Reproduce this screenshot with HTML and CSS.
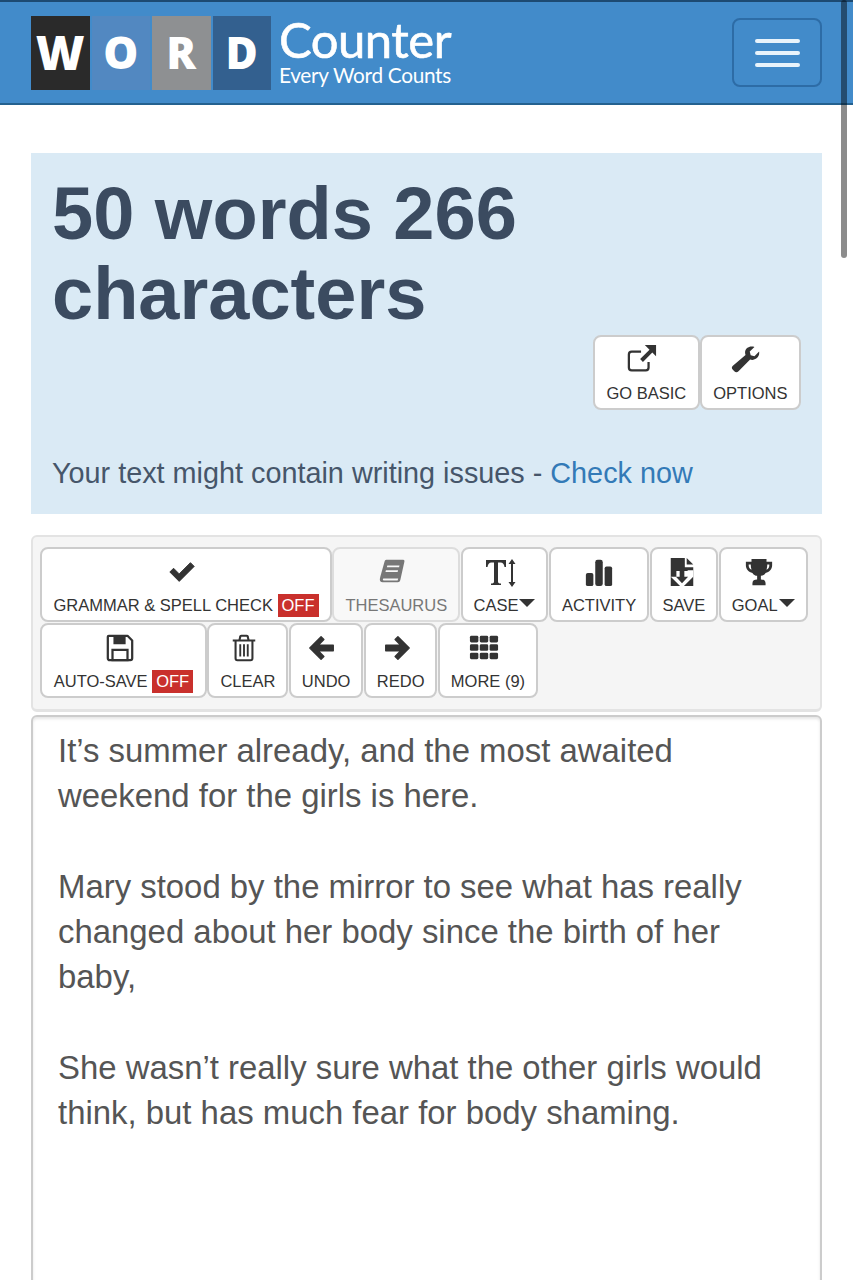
FILE: index.html
```html
<!DOCTYPE html>
<html lang="en">
<head>
    <meta charset="UTF-8">
    <meta name="viewport" content="width=device-width, initial-scale=1.0">
    <title>Word Counter</title>
    <link rel="stylesheet" href="styles.css">
</head>
<body>
    <header class="navbar">
        <a class="brand" href="#">
            <span class="tiles">
                <span class="tile tile-w">W</span>
                <span class="tile tile-o">O</span>
                <span class="tile tile-r">R</span>
                <span class="tile tile-d">D</span>
            </span>
            <span class="brand-text">
                <span class="brand-name">Counter</span>
                <span class="brand-tag">Every Word Counts</span>
            </span>
        </a>
        <button class="menu-btn" aria-label="Menu">
            <span class="menu-bar"></span>
            <span class="menu-bar"></span>
            <span class="menu-bar"></span>
        </button>
    </header>
    <div class="scroll-thumb"></div>

    <main class="container">
        <section class="count-panel">
            <h1 class="count-title">50 words 266 characters</h1>
            <div class="panel-actions">
                <a class="tool-btn" href="#">
                    <svg class="icon" viewBox="0 0 32 32"><path d="M23 18v6a3 3 0 0 1-3 3H5a3 3 0 0 1-3-3V10a3 3 0 0 1 3-3h10" fill="none" stroke="#333" stroke-width="2.400"/><path d="M19 0h12v12l-4-4-10 10-3-3L24 5z" fill="#333"/></svg>
                    <span>GO BASIC</span>
                </a>
                <a class="tool-btn" href="#">
                    <svg class="icon" viewBox="0 0 32 32"><path d="M30 7l-5 5-4-1-1-4 5-5c-5-1.500-10 1-10 6 0 1 .2 2 .5 2.600L2 22a3.200 3.200 0 0 0 0 4.500l1.500 1.500a3.200 3.200 0 0 0 4.500 0l12.400-12.500c4 1.500 10.600-1.500 9.600-8.500z" fill="#333"/></svg>
                    <span>OPTIONS</span>
                </a>
            </div>
            <p class="issues">Your text might contain writing issues - <a href="#">Check now</a></p>
        </section>

        <section class="toolbar">
            <a class="tool-btn tool-grammar" href="#">
                <svg class="icon" viewBox="0 0 32 32"><path d="M3 16l4-4 6 6L25 6l4 4-16 16z" fill="#333" stroke="#333" stroke-linejoin="round"/></svg>
                <span>GRAMMAR &amp; SPELL CHECK <b class="off">OFF</b></span>
            </a>
            <a class="tool-btn tool-muted" href="#">
                <svg class="icon" viewBox="0 0 32 32"><path d="M10 3h18c1 0 1.500 1 1.200 2L25 24c-.3 1.500-1 3-3 3H6c-2 0-3-1.500-3-3 0-1 .3-2 .5-3L8 5c.3-1 1-2 2-2zm1 6l-.5 2h13l.5-2zm-1.500 5l-.5 2h13l.5-2zM7 23c-1 0-1 2 0 2h15l.6-2z" fill="#777" fill-rule="evenodd"/></svg>
                <span>THESAURUS</span>
            </a>
            <a class="tool-btn" href="#">
                <svg class="icon icon-case" viewBox="0 0 32 32"><path d="M1 3h20v7h-1.500c-.5-3-1.500-4.500-4-4.500H13v19c0 1.500.8 2 3 2V28H6v-1.500c2.200 0 3-.5 3-2v-19H6.500c-2.500 0-3.500 1.500-4 4.500H1z" fill="#333"/><path d="M27 6v20" stroke="#333" stroke-width="2"/><path d="M23.500 7L27 2l3.500 5zM23.500 25l3.500 5 3.500-5z" fill="#333"/></svg>
                <span>CASE<i class="caret"></i></span>
            </a>
            <a class="tool-btn" href="#">
                <svg class="icon icon-centered" viewBox="0 0 32 32"><rect x="2" y="17" width="8" height="14" rx="2" fill="#333"/><rect x="12" y="3" width="8" height="28" rx="2.500" fill="#333"/><rect x="22" y="10" width="8" height="21" rx="2" fill="#333"/></svg>
                <span>ACTIVITY</span>
            </a>
            <a class="tool-btn" href="#">
                <svg class="icon icon-save" viewBox="0 0 32 32"><path d="M4 1h15v10h9v20H4z" fill="#333"/><path d="M21 1l7 7h-7z" fill="#333"/><path d="M4 21h6v-6h12v-1h6v7L17 32h-2z" fill="#fff"/><path d="M13.500 15h5v6h4l-6.500 7-6.500-7h4z" fill="#333"/></svg>
                <span>SAVE</span>
            </a>
            <a class="tool-btn" href="#">
                <svg class="icon" viewBox="0 0 32 32"><path d="M8 2h16v3h6v4c0 4-3 7-7 8-1 2-3 3-5 3v4c3 0 5 1 5 4v2H9v-2c0-3 2-4 5-4v-4c-2 0-4-1-5-3-4-1-7-4-7-8V5h6zM5 8v1c0 2 1 3.500 3 4.500-.5-1.500-.8-3.500-.8-5.500zm22 0h-2.200c0 2-.3 4-.8 5.500 2-1 3-2.500 3-4.500z" fill="#333" fill-rule="evenodd"/></svg>
                <span>GOAL<i class="caret"></i></span>
            </a>
            <a class="tool-btn tool-autosave" href="#">
                <svg class="icon" viewBox="0 0 32 32"><path d="M4 3h20l5 5v19a2 2 0 0 1-2 2H5a2 2 0 0 1-2-2V4a1 1 0 0 1 1-1z" fill="none" stroke="#333" stroke-width="2.400" stroke-linejoin="round"/><path d="M9 3h13v9H9z" fill="#333"/><path d="M8 18h16v11H8z" fill="none" stroke="#333" stroke-width="2.400"/></svg>
                <span>AUTO-SAVE <b class="off">OFF</b></span>
            </a>
            <a class="tool-btn" href="#">
                <svg class="icon" viewBox="0 0 32 32"><path d="M4 8h24M11 8l1-4a1 1 0 0 1 1-1h6a1 1 0 0 1 1 1l1 4M7 8v19a2 2 0 0 0 2 2h14a2 2 0 0 0 2-2V8" fill="none" stroke="#333" stroke-width="2.200"/><path d="M12 12v13M16 12v13M20 12v13" stroke="#333" stroke-width="2"/></svg>
                <span>CLEAR</span>
            </a>
            <a class="tool-btn" href="#">
                <svg class="icon" viewBox="0 0 32 32"><path d="M15 4l3 3-6 6h16v6H12l6 6-3 3L3 16z" fill="#333" stroke="#333" stroke-width="1.500" stroke-linejoin="round"/></svg>
                <span>UNDO</span>
            </a>
            <a class="tool-btn" href="#">
                <svg class="icon" viewBox="0 0 32 32"><path d="M17 4l-3 3 6 6H4v6h16l-6 6 3 3 12-12z" fill="#333" stroke="#333" stroke-width="1.500" stroke-linejoin="round"/></svg>
                <span>REDO</span>
            </a>
            <a class="tool-btn" href="#">
                <svg class="icon" viewBox="0 0 32 32"><g fill="#333"><rect x="1" y="3" width="9" height="7" rx="1.500"/><rect x="11.500" y="3" width="9" height="7" rx="1.500"/><rect x="22" y="3" width="9" height="7" rx="1.500"/><rect x="1" y="12" width="9" height="7" rx="1.500"/><rect x="11.500" y="12" width="9" height="7" rx="1.500"/><rect x="22" y="12" width="9" height="7" rx="1.500"/><rect x="1" y="21" width="9" height="7" rx="1.500"/><rect x="11.500" y="21" width="9" height="7" rx="1.500"/><rect x="22" y="21" width="9" height="7" rx="1.500"/></g></svg>
                <span>MORE (9)</span>
            </a>
        </section>

        <section class="editor">
            <p>It’s summer already, and the most awaited weekend for the girls is here.</p>
            <p>Mary stood by the mirror to see what has really changed about her body since the birth of her baby,</p>
            <p>She wasn’t really sure what the other girls would think, but has much fear for body shaming.</p>
        </section>
    </main>
</body>
</html>
```

FILE: styles.css
```css
html, body {
    height: 1280px;
    overflow: hidden;
}

body {
    margin: 0;
    font-family: "Liberation Sans", Arial, sans-serif;
    background: #fff;
    color: #333;
}

a {
    text-decoration: none;
}

.navbar {
    height: 105px;
    box-sizing: border-box;
    background: #428bca;
    border-top: 2px solid #1d4a72;
    border-bottom: 2px solid #24618f;
    padding: 14px 31px 0;
    display: flex;
    justify-content: space-between;
    align-items: flex-start;
}

.brand {
    display: flex;
    color: #fff;
}

.tiles {
    display: flex;
    gap: 2px;
}

.tile {
    width: 58.500px;
    height: 74px;
    padding-bottom: 2px;
    box-sizing: border-box;
    display: flex;
    align-items: center;
    justify-content: center;
    color: #fff;
    font-family: "Open Sans", sans-serif;
    font-weight: 800;
    font-size: 44px;
}

.tile-w { background: #2a2a2a; font-size: 47px; }
.tile-o { background: #5288c1; }
.tile-r { background: #8e9092; }
.tile-d { background: #33608f; }

.brand-text {
    display: flex;
    flex-direction: column;
    margin-left: 8px;
    font-family: "Lato", sans-serif;
    font-weight: 400;
}

.brand-name {
    font-size: 49px;
    line-height: 50px;
    letter-spacing: -0.500px;
    margin-top: -2px;
    -webkit-text-stroke: 0.600px #fff;
}

.brand-tag {
    font-size: 20.800px;
    line-height: 22px;
    letter-spacing: -0.300px;
}

.menu-btn {
    width: 90px;
    height: 69px;
    margin: 2px 0 0;
    background: transparent;
    border: 2px solid #2d6ca6;
    border-radius: 8px;
    display: flex;
    flex-direction: column;
    align-items: center;
    justify-content: center;
    gap: 8px;
    padding: 0;
}

.menu-bar {
    width: 45px;
    height: 4px;
    border-radius: 2px;
    background: #e8f3fb;
}

.scroll-thumb {
    position: absolute;
    top: 0;
    left: 841px;
    width: 6px;
    height: 258px;
    border-radius: 3px;
    background: rgba(0, 0, 0, 0.45);
}

.container {
    padding: 48px 31px 0;
}

.count-panel {
    background: #daeaf5;
    height: 361px;
    box-sizing: border-box;
    padding: 21px 21px 0;
    display: flex;
    flex-direction: column;
}

.count-title {
    margin: 0;
    font-size: 74px;
    line-height: 80px;
    font-weight: bold;
    color: #3b4b60;
    width: 600px;
}

.panel-actions {
    display: flex;
    justify-content: flex-end;
    margin-top: 1px;
}

.panel-actions .tool-btn {
    padding-left: 11.500px;
    padding-right: 11.500px;
}

.issues {
    margin: 46px 0 0;
    font-size: 28.800px;
    line-height: 34px;
    color: #46566a;
}

.issues a {
    color: #337ab7;
}

.tool-btn {
    display: flex;
    flex-direction: column;
    align-items: center;
    justify-content: space-between;
    box-sizing: border-box;
    height: 75px;
    padding: 8px 11px 5px;
    background: #fff;
    border: 2px solid #ccc;
    border-radius: 8px;
    color: #333;
    font-size: 16.500px;
    line-height: 20px;
    white-space: nowrap;
}

.icon {
    width: 30px;
    height: 30px;
    display: block;
    margin-right: 8px;
}

.icon-case {
    width: 32px;
    height: 32px;
}

.icon-centered {
    margin-right: 0;
}

.icon-save {
    margin-right: 4px;
}

.toolbar {
    margin-top: 21px;
    height: 177px;
    box-sizing: border-box;
    background: #f5f5f5;
    border: 2px solid #e3e3e3;
    border-bottom-width: 3px;
    border-radius: 6px;
    padding: 10px 7px 0;
    display: flex;
    flex-wrap: wrap;
    align-content: flex-start;
    gap: 1px 0.400px;
}

.tool-grammar {
    width: 292px;
}

.tool-autosave {
    width: 167px;
}

.tool-muted {
    background: #f8f8f8;
    border-color: #ddd;
    color: #777;
}

.off {
    display: inline-block;
    font-weight: normal;
    background: #c9302c;
    color: #fff;
    padding: 0 4px;
    line-height: 23px;
    margin: -2px 0;
}

.caret {
    display: inline-block;
    border-left: 8px solid transparent;
    border-right: 8px solid transparent;
    border-top: 8px solid #333;
    margin-left: 1px;
    vertical-align: 4px;
}

.editor {
    margin-top: 3px;
    height: 620px;
    box-sizing: border-box;
    background: #fff;
    border: 2px solid #ccc;
    border-radius: 6px;
    box-shadow: inset 0 2px 3px rgba(0, 0, 0, 0.1);
    padding: 11px 25px;
    font-size: 32.900px;
    line-height: 45.300px;
    color: #555;
}

.editor p {
    margin: 0 0 45.300px;
}
```
